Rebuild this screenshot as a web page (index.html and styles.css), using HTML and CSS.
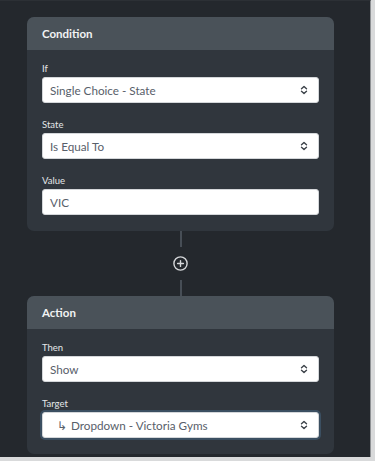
FILE: index.html
```html
<!DOCTYPE html>
<html>
<head>
<meta charset="utf-8">
<link rel="stylesheet" href="styles.css">
</head>
<body>
<div class="frame">
  <section class="card">
    <div class="card-head">Condition</div>
    <div class="card-body">
      <div class="field">
        <div class="label">If</div>
        <div class="select"><span class="value">Single Choice - State</span><svg class="updown" width="8" height="10" viewBox="0 0 8 10"><path d="M1.5 3.8 L4 1.5 L6.5 3.8 M1.5 6.2 L4 8.5 L6.5 6.2" fill="none" stroke="#3c4249" stroke-width="1.4" stroke-linecap="round" stroke-linejoin="round"/></svg></div>
      </div>
      <div class="field">
        <div class="label">State</div>
        <div class="select"><span class="value">Is Equal To</span><svg class="updown" width="8" height="10" viewBox="0 0 8 10"><path d="M1.5 3.8 L4 1.5 L6.5 3.8 M1.5 6.2 L4 8.5 L6.5 6.2" fill="none" stroke="#3c4249" stroke-width="1.4" stroke-linecap="round" stroke-linejoin="round"/></svg></div>
      </div>
      <div class="field">
        <div class="label">Value</div>
        <div class="select input"><span class="value">VIC</span></div>
      </div>
    </div>
  </section>

  <div class="connector">
    <div class="line"></div>
    <svg class="plus" width="15" height="15" viewBox="0 0 15 15"><circle cx="7.5" cy="7.5" r="6.6" fill="none" stroke="#d6d8da" stroke-width="1.4"/><path d="M7.5 4.6 V10.4 M4.6 7.5 H10.4" stroke="#d6d8da" stroke-width="1.4" stroke-linecap="round"/></svg>
    <div class="line"></div>
  </div>

  <section class="card">
    <div class="card-head">Action</div>
    <div class="card-body">
      <div class="field">
        <div class="label">Then</div>
        <div class="select"><span class="value">Show</span><svg class="updown" width="8" height="10" viewBox="0 0 8 10"><path d="M1.5 3.8 L4 1.5 L6.5 3.8 M1.5 6.2 L4 8.5 L6.5 6.2" fill="none" stroke="#3c4249" stroke-width="1.4" stroke-linecap="round" stroke-linejoin="round"/></svg></div>
      </div>
      <div class="field">
        <div class="label">Target</div>
        <div class="select focus"><span class="value"><span class="indent">↳</span>Dropdown - Victoria Gyms</span><svg class="updown" width="8" height="10" viewBox="0 0 8 10"><path d="M1.5 3.8 L4 1.5 L6.5 3.8 M1.5 6.2 L4 8.5 L6.5 6.2" fill="none" stroke="#3c4249" stroke-width="1.4" stroke-linecap="round" stroke-linejoin="round"/></svg></div>
      </div>
    </div>
  </section>
</div>
</body>
</html>
```

FILE: styles.css
```css
html, body {
  margin: 0;
  padding: 0;
  background: #d9dadb;
}

body {
  width: 375px;
  height: 461px;
  overflow: hidden;
  font-family: "Lato", "Liberation Sans", sans-serif;
}

.frame {
  box-sizing: border-box;
  width: 371px;
  height: 457px;
  background: #24282d;
  border-top: 1px solid #2c3035;
  border-right: 1px solid #8e9194;
  padding-top: 16px;
  padding-left: 27px;
}

.card {
  width: 307px;
  background: #30363d;
  border-radius: 7px;
  overflow: hidden;
}

.card-head {
  height: 33px;
  display: flex;
  align-items: center;
  padding-left: 15px;
  background: #4a5259;
  color: #f2f3f4;
  font-size: 11.5px;
  font-weight: 700;
}

.card-body {
  padding: 13px 15px 16px;
  display: flex;
  flex-direction: column;
  gap: 16px;
}

.field {
  display: flex;
  flex-direction: column;
  gap: 2px;
}

.label {
  height: 12px;
  line-height: 12px;
  font-size: 9.5px;
  color: #e4e6e8;
}

.select {
  box-sizing: border-box;
  height: 26px;
  background: #ffffff;
  border: 1px solid #d4d7da;
  border-radius: 3px;
  display: flex;
  align-items: center;
  justify-content: space-between;
  padding: 0 10px 0 7px;
  color: #58606a;
  font-size: 11.7px;
}

.select.focus {
  box-shadow: 0 0 0 2px #3b4f61;
}

.indent {
  display: inline-block;
  margin-left: 7px;
  margin-right: 4px;
}

.updown {
  display: block;
}

.connector {
  width: 307px;
  height: 65px;
  display: flex;
  flex-direction: column;
  align-items: center;
  justify-content: space-between;
}

.connector .line {
  width: 2px;
  height: 16px;
  background: #474e56;
}

.plus {
  display: block;
}
```
